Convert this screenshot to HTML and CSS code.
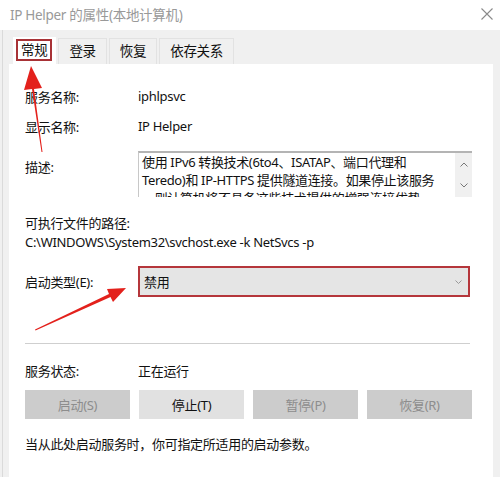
FILE: index.html
```html
<!DOCTYPE html>
<html lang="zh-CN">
<head>
<meta charset="utf-8">
<title>IP Helper 的属性(本地计算机)</title>
<link rel="stylesheet" href="styles.css">
</head>
<body>
<div class="window">
  <div class="titlebar">
    <span class="title">IP Helper 的属性(本地计算机)</span>
    <svg class="close" width="12" height="12" viewBox="0 0 12 12"><path d="M0.5 0.5 L11.5 11.5 M11.5 0.5 L0.5 11.5" stroke="#8a8a8a" stroke-width="1.1" fill="none"/></svg>
  </div>
  <div class="body">
    <div class="tabs">
      <div class="tab active"><span class="mark">常规</span></div>
      <div class="tab">登录</div>
      <div class="tab">恢复</div>
      <div class="tab">依存关系</div>
    </div>
    <div class="panel">
      <div class="row r1"><span class="label">服务名称:</span><span>iphlpsvc</span></div>
      <div class="row r2"><span class="label">显示名称:</span><span>IP Helper</span></div>
      <div class="row desc">
        <span class="label desc-label">描述:</span>
        <div class="textbox">
          <div class="tb-text">使用 IPv6 转换技术(6to4、ISATAP、端口代理和 Teredo)和 IP-HTTPS 提供隧道连接。如果停止该服务<br>，则计算机将不具备这些技术提供的增强连接优势。</div>
          <div class="scroll">
            <svg width="8" height="5" viewBox="0 0 8 5"><path d="M0.5 4.5 L4 1 L7.5 4.5" stroke="#777" stroke-width="1" fill="none"/></svg>
            <svg width="8" height="5" viewBox="0 0 8 5"><path d="M0.5 0.5 L4 4 L7.5 0.5" stroke="#777" stroke-width="1" fill="none"/></svg>
          </div>
        </div>
      </div>
      <div class="plain pathlabel">可执行文件的路径:</div>
      <div class="plain path">C:\WINDOWS\System32\svchost.exe -k NetSvcs -p</div>
      <div class="row start">
        <span class="label">启动类型(E):</span>
        <div class="select"><span>禁用</span>
          <svg width="7" height="4" viewBox="0 0 7 4"><path d="M0.5 0.5 L3.5 3.5 L6.5 0.5" stroke="#999" stroke-width="1" fill="none"/></svg>
        </div>
      </div>
      <div class="sep"></div>
      <div class="row status"><span class="label">服务状态:</span><span>正在运行</span></div>
      <div class="buttons">
        <div class="btn disabled">启动(S)</div>
        <div class="btn">停止(T)</div>
        <div class="btn disabled">暂停(P)</div>
        <div class="btn disabled">恢复(R)</div>
      </div>
      <div class="plain note">当从此处启动服务时，你可指定所适用的启动参数。</div>
    </div>
  </div>
</div>
<svg class="arrows" width="500" height="477" viewBox="0 0 500 477">
  <polygon fill="#e3211c" points="31,66 42,88 34,89 42.5,152 41.5,152 32,89 24,90"/>
  <polygon fill="#e3211c" points="126,288 113,302 110.5,297 35.5,330.5 35,329.5 109,294 107,289"/>
</svg>
</body>
</html>
```
FILE: styles.css
```css
html, body {
  margin: 0;
  padding: 0;
}
body {
  width: 500px;
  height: 477px;
  overflow: hidden;
  background: #f0f0f0;
  font-family: "Noto Sans", "Noto Sans CJK SC", sans-serif;
  font-size: 13px;
  letter-spacing: -0.3px;
  color: #111;
  position: relative;
}
.window {
  display: flex;
  flex-direction: column;
  height: 477px;
}
.titlebar {
  height: 30px;
  background: #fff;
  display: flex;
  align-items: center;
  justify-content: space-between;
  padding: 0 7px 3px 10px;
  box-sizing: border-box;
}
.title {
  color: #999;
  font-size: 13.5px;
}
.body {
  flex: 1;
  display: flex;
  flex-direction: column;
  padding: 0 7px 0 6px;
  border-left: 1px solid #dadada;
  margin-left: 2px;
}
.tabs {
  display: flex;
  align-items: flex-end;
  height: 34px;
  padding-left: 4px;
  gap: 2px;
}
.tab {
  height: 26px;
  padding: 0 10px;
  display: flex;
  align-items: center;
  font-size: 13.5px;
  background: #f0f0f0;
  border: 1px solid #e2e2e2;
  border-bottom: none;
  box-sizing: border-box;
  padding-bottom: 3px;
}
.tab.active {
  background: #fff;
  height: 27px;
  padding: 0 3px 2px 2px;
  border-color: #fff;
}
.mark {
  border: 2px solid #a83236;
  padding: 0 3px;
  line-height: 18px;
}
.panel {
  flex: 1;
  background: #fff;
  padding: 22px 21px 0 16px;
  display: flex;
  flex-direction: column;
}
.row {
  display: flex;
  align-items: center;
  height: 20px;
}
.label {
  width: 113px;
  flex: none;
}
.r2 { margin-top: 10px; }
.desc {
  margin-top: 15px;
  height: 46px;
  align-items: flex-start;
}
.desc-label {
  margin-top: 6px;
}
.textbox {
  flex: 1;
  height: 46px;
  border-top: 2px solid #b4b4b4;
  border-left: 1px solid #c8c8c8;
  display: flex;
  overflow: hidden;
  box-sizing: border-box;
}
.tb-text {
  flex: 1;
  padding: 0 3px;
  line-height: 18px;
  font-size: 13px;
  letter-spacing: -0.35px;
}
.scroll {
  width: 17px;
  flex: none;
  background: #f0f0f0;
  display: flex;
  flex-direction: column;
  align-items: center;
  justify-content: space-between;
  padding: 9px 0 9px;
  box-sizing: border-box;
}
.plain {
  height: 20px;
  line-height: 20px;
}
.pathlabel { margin-top: 16px; }
.path { margin-top: -1px; }
.start {
  margin-top: 14px;
  height: 31px;
}
.select {
  width: 332px;
  height: 31px;
  box-sizing: border-box;
  border: 2px solid #b5363b;
  background: #e5e5e5;
  display: flex;
  align-items: center;
  justify-content: space-between;
  padding: 0 6px 0 4px;
}
.sep {
  margin-top: 46px;
  height: 1px;
  background: #cfcfcf;
  margin-right: 2px;
}
.status { margin-top: 16px; }
.buttons {
  margin-top: 10px;
  display: grid;
  grid-template-columns: repeat(4, 105px);
  column-gap: 9px;
}
.btn {
  height: 29px;
  background: #e1e1e1;
  display: flex;
  align-items: center;
  justify-content: center;
  font-size: 13px;
}
.btn.disabled {
  background: #cccccc;
  color: #8d8d8d;
}
.note { margin-top: 15px; }
.arrows {
  position: absolute;
  left: 0;
  top: 0;
  pointer-events: none;
}
```
